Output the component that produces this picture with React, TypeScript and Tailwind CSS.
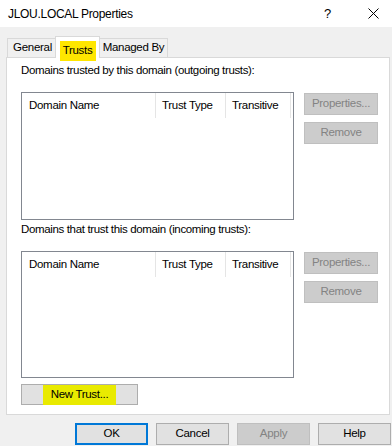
import React, { FC } from "react";

const font = { fontFamily: '"Liberation Sans", Arial, sans-serif' };

const DisabledButton: FC<{ label: string }> = ({ label }) => (
  <div className="flex h-[22px] w-[74px] items-center justify-center border border-[#bfbfbf] bg-[#cccccc] text-[11.5px] tracking-[-0.3px] text-[#838383]">
    {label}
  </div>
);

const TrustList: FC = () => (
  <div className="h-full w-[273px] border border-[#828790] bg-white">
    <div className="flex h-[25px] items-center text-[11.5px] tracking-[-0.3px] text-black">
      <div className="flex h-full w-[134px] items-center border-r border-[#e5e5e5] pl-[7px]">Domain Name</div>
      <div className="flex h-full w-[70px] items-center border-r border-[#e5e5e5] pl-[6px]">Trust Type</div>
      <div className="flex h-full w-[65px] items-center border-r border-[#e5e5e5] pl-[6px]">Transitive</div>
    </div>
  </div>
);

const TrustSection: FC<{ label: string; listHeight: string }> = ({ label, listHeight }) => (
  <div className="flex flex-col">
    <div className="h-[15px] whitespace-nowrap text-[11.5px] leading-[15px] tracking-[-0.35px] text-black">{label}</div>
    <div className={`mt-[14px] flex gap-[10px] ${listHeight}`}>
      <TrustList />
      <div className="flex flex-col gap-[7px] pt-px">
        <DisabledButton label="Properties..." />
        <DisabledButton label="Remove" />
      </div>
    </div>
  </div>
);

const DialogButton: FC<{ label: string; primary?: boolean; disabled?: boolean }> = ({ label, primary, disabled }) => {
  if (disabled) {
    return (
      <div className="flex h-[22px] w-[73px] items-center justify-center border border-[#bfbfbf] bg-[#cccccc] text-[11.5px] tracking-[-0.3px] text-[#838383]">
        {label}
      </div>
    );
  }
  return (
    <div
      className={
        primary
          ? "flex h-[22px] w-[73px] items-center justify-center border-2 border-[#0078d7] bg-[#e1e1e1] text-[11.5px] tracking-[-0.3px] text-black"
          : "flex h-[22px] w-[73px] items-center justify-center border border-[#adadad] bg-[#e1e1e1] text-[11.5px] tracking-[-0.3px] text-black"
      }
    >
      {label}
    </div>
  );
};

const App: FC = () => {
  return (
    <div className="flex h-[446px] w-[392px] flex-col overflow-hidden bg-[#f0f0f0]" style={font}>
      {/* title bar */}
      <div className="flex h-[27px] items-center bg-white pl-[8px] text-[12px] tracking-[-0.3px] text-black">
        <span className="pt-px">JLOU.LOCAL Properties</span>
        <span className="ml-auto text-[13px]">?</span>
        <svg className="ml-[37px] mr-[13px]" width="11" height="11" viewBox="0 0 11 11">
          <path d="M0.5 0.5 L10.5 10.5 M10.5 0.5 L0.5 10.5" stroke="#000" strokeWidth="1" />
        </svg>
      </div>

      {/* tabs */}
      <div className="mt-[9px] flex h-[21px] items-end whitespace-nowrap pl-[7px] text-[11.5px] tracking-[-0.3px] text-black">
        <div className="flex h-[19px] w-[48px] items-center justify-center border-l border-t border-[#d9d9d9] bg-[#f0f0f0] pl-[2px]">
          General
        </div>
        <div className="relative z-10 -mb-px flex h-[22px] w-[45px] items-start justify-center border-x border-t border-[#d9d9d9] bg-white">
          <span className="mt-[4px] flex h-[20px] w-[36px] items-start justify-center bg-[#ffe600] pt-[1px]">Trusts</span>
        </div>
        <div className="flex h-[19px] w-[68px] items-center justify-center border-r border-t border-[#d9d9d9] bg-[#f0f0f0]">
          Managed By
        </div>
      </div>

      {/* panel */}
      <div className="ml-[6px] flex h-[358px] w-[384px] flex-col border border-[#d9d9d9] bg-white pl-[14px] pt-[5px]">
        <TrustSection label="Domains trusted by this domain (outgoing trusts):" listHeight="h-[128px]" />
        <div className="mt-[2px]">
          <TrustSection label="Domains that trust this domain (incoming trusts):" listHeight="h-[127px]" />
        </div>
        <div className="mt-[6px] flex h-[21px] w-[117px] items-center justify-center border border-[#adadad] bg-[#e1e1e1] text-[11.5px] tracking-[-0.3px] text-black">
          <span className="flex h-[20px] items-center bg-[#e9ea00] px-[8px]">New Trust...</span>
        </div>
      </div>

      {/* dialog buttons */}
      <div className="mt-[8px] flex gap-[8px] pl-[75px]">
        <DialogButton label="OK" primary />
        <DialogButton label="Cancel" />
        <DialogButton label="Apply" disabled />
        <DialogButton label="Help" />
      </div>
    </div>
  );
};

export default App;
